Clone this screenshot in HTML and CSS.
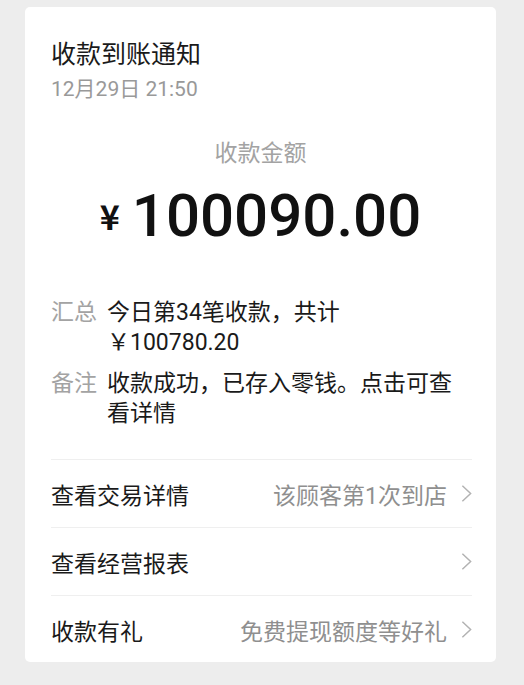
FILE: index.html
```html
<!DOCTYPE html>
<html lang="zh-CN">
<head>
    <meta charset="UTF-8">
    <meta name="viewport" content="width=device-width, initial-scale=1.0">
    <title>收款到账通知</title>
    <link rel="stylesheet" href="styles.css">
</head>
<body>
    <div class="card">
        <div class="head">
            <div class="title">收款到账通知</div>
            <div class="date">12月29日 21:50</div>
        </div>
        <div class="money">
            <div class="money-label">收款金额</div>
            <div class="money-num"><span class="yen">¥</span>100090.00</div>
        </div>
        <div class="meta">
            <div class="meta-row">
                <span class="meta-key">汇总</span>
                <span class="meta-val">今日第34笔收款，共计<br>￥100780.20</span>
            </div>
            <div class="meta-row">
                <span class="meta-key">备注</span>
                <span class="meta-val">收款成功，已存入零钱。点击可查看详情</span>
            </div>
        </div>
        <ul class="list">
            <li>
                <span class="item-name">查看交易详情</span>
                <span class="item-tip">该顾客第1次到店</span>
                <svg class="arrow" viewBox="0 0 12 20"><path d="M1.5 1.5 L10.5 10 L1.5 18.5" /></svg>
            </li>
            <li>
                <span class="item-name">查看经营报表</span>
                <span class="item-tip"></span>
                <svg class="arrow" viewBox="0 0 12 20"><path d="M1.5 1.5 L10.5 10 L1.5 18.5" /></svg>
            </li>
            <li>
                <span class="item-name">收款有礼</span>
                <span class="item-tip">免费提现额度等好礼</span>
                <svg class="arrow" viewBox="0 0 12 20"><path d="M1.5 1.5 L10.5 10 L1.5 18.5" /></svg>
            </li>
        </ul>
    </div>
</body>
</html>
```

FILE: styles.css
```css
html, body {
    margin: 0;
    padding: 0;
}
body {
    background: #ededed;
    font-family: Roboto, "Noto Sans CJK SC", sans-serif;
    color: #1a1a1a;
    text-spacing-trim: space-all;
}
.card {
    width: 471px;
    height: 655px;
    margin: 7px 0 0 25px;
    background: #fff;
    border-radius: 5px;
    box-sizing: border-box;
    overflow: hidden;
}
.head {
    padding: 31px 26px 0;
}
.title {
    font-size: 25px;
    line-height: 34px;
}
.date {
    font-size: 21px;
    line-height: 30px;
    color: #999;
    margin-top: 2px;
}
/* 金额 */
.money {
    text-align: center;
    margin-top: 35px;
}
.money-label {
    font-size: 23px;
    line-height: 30px;
    color: #a3a3a3;
}
.money-num {
    font-size: 60px;
    font-weight: 500;
    line-height: 72px;
    margin-top: 11px;
    color: #111;
}
.money-num .yen {
    font-family: "Noto Sans CJK SC", sans-serif;
    font-size: 34px;
    font-weight: 700;
    margin-right: 12px;
    vertical-align: 6px;
}
.meta {
    padding: 46px 26px 0;
}
.meta-row {
    display: flex;
    gap: 10px;
    font-size: 23px;
    line-height: 30px;
    margin-bottom: 11px;
}
.meta-key {
    flex: none;
    color: #a3a3a3;
}
.meta-val {
    color: #1a1a1a;
}
/* 列表 */
.list {
    list-style: none;
    margin: 30px 24px 0 26px;
    padding: 0;
}
.list li {
    display: flex;
    align-items: center;
    height: 67px;
    border-top: 1px solid #efefef;
    font-size: 23px;
}
.item-name {
    flex: 1;
}
.item-tip {
    color: #8f8f8f;
}
.arrow {
    width: 11px;
    height: 19px;
    margin-left: 14px;
    fill: none;
    stroke: #b2b2b2;
    stroke-width: 1.6;
}
```
